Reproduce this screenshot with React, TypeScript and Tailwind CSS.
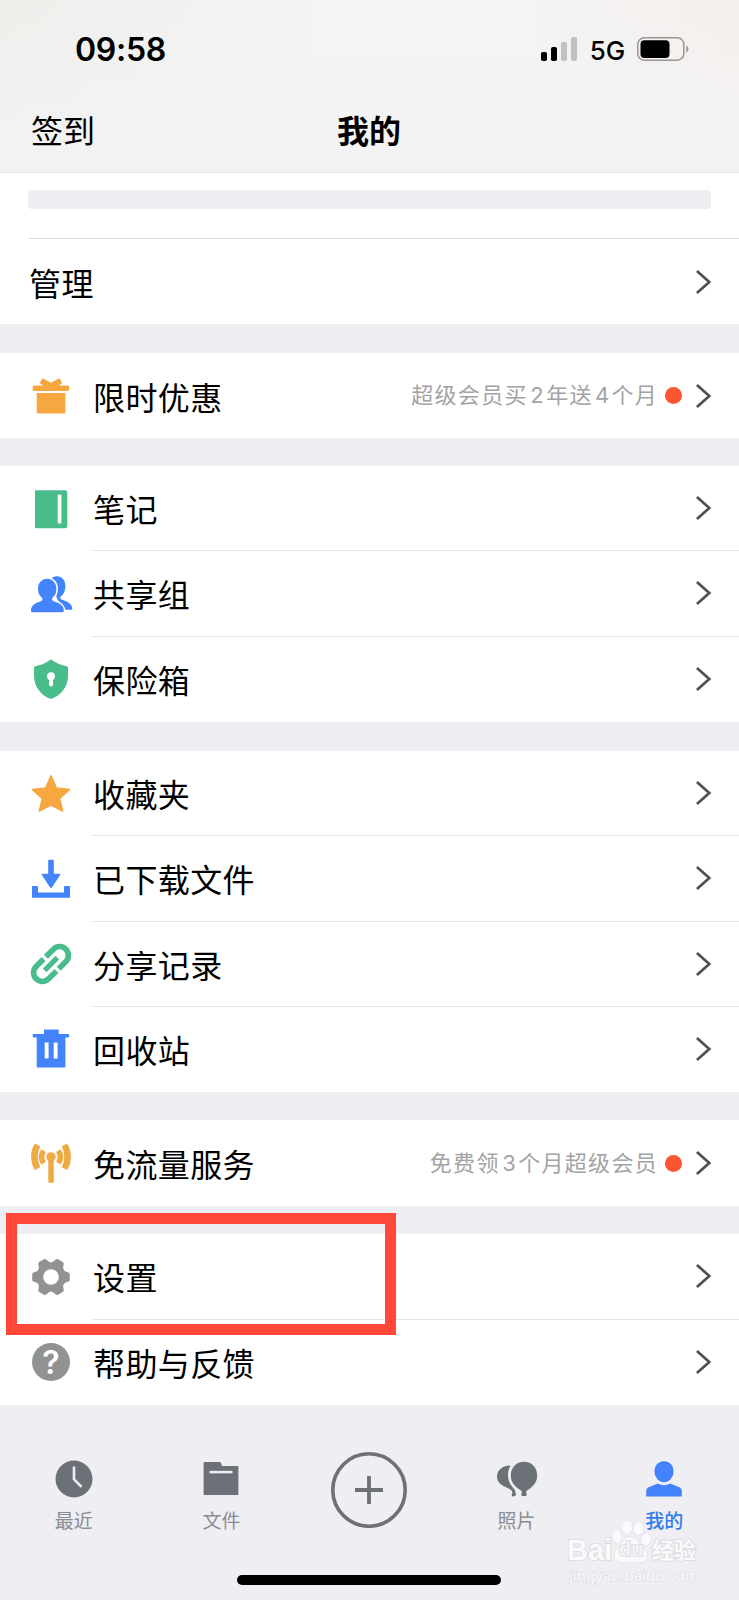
import type { ReactNode } from "react";

type RowProps = {
  icon?: ReactNode;
  label: string;
  hint?: string;
  divider?: boolean;
};

function Icon({ children, className }: { children: ReactNode; className?: string }) {
  return (
    <svg
      viewBox="0 0 40 40"
      fill="currentColor"
      aria-hidden="true"
      className={`size-10 shrink-0 overflow-visible ${className ?? ""}`}
    >
      {children}
    </svg>
  );
}

const GiftIcon = () => (
  <Icon className="text-[#f6a740]">
    <path d="M12.2 2.6 20 6.8l7.800-4.200q.8-.2 1.100.4l2 3.400q.3.900-.4 1.400L27 10H13L9.500 7.800q-.7-.5-.4-1.400l2-3.400q.3-.6 1.100-.4Z" />
    <rect x="1.700" y="9.400" width="36.400" height="5.500" rx="1" />
    <path d="M5.700 16.900h28.700v19.700a1 1 0 0 1-1 1H6.700a1 1 0 0 1-1-1Z" />
  </Icon>
);

const NoteIcon = () => (
  <Icon className="text-[#48bc8b]">
    <path d="M5 1.300h29a2.300 2.300 0 0 1 2.300 2.300V37a2.300 2.300 0 0 1-2.300 2.300H5a1 1 0 0 1-1-1v-36a1 1 0 0 1 1-1Z" />
    <rect x="26.700" y="5.600" width="3.700" height="29" rx=".8" fill="white" />
  </Icon>
);

const GroupIcon = () => (
  <Icon className="text-[#4383fb]">
    <path d="M21 3.800c6.500-4 13.400.2 13.400 8.200 0 5.500-2.300 9-4.900 10.700-.8 1.800.2 2.600 2.500 3.300 6.500 2.300 9.300 5.300 9.300 8.700q0 1-1 1h-5.500L26 25Z" />
    <path
      d="M16.100 4.700c5.600 0 9.300 4.400 9.300 10.100 0 4.400-1.500 7.200-3.800 8.800-1.400 2.700.2 3.500 2.500 4.200 5.900 1.900 8.700 4.500 8.700 8.900q0 1.600-1.500 1.600H1.500Q0 38.300 0 36.700c0-4.400 2.800-7 8.400-8.900 2.300-.7 3.900-1.500 2.500-4.200C8.600 22 7 19.200 7 14.800 7 9.100 10.500 4.700 16.100 4.700Z"
      stroke="white"
      strokeWidth="3"
      paintOrder="stroke"
    />
  </Icon>
);

const SafeIcon = () => (
  <Icon className="text-[#48bc8b]">
    <path d="M19.300.7q.7-.5 1.400 0c4.500 3.500 9.500 5.500 15.200 6.600q1.100.3 1.100 1.400v7.800C37 28 29.500 36.800 20.800 39.700q-.8.300-1.600 0C10.500 36.800 3 28 3 16.500V8.700q0-1.100 1.100-1.400C9.800 6.200 14.800 4.200 19.300.7Z" />
    <circle cx="20" cy="17.300" r="4" fill="white" />
    <path d="M18 18h4v7.400a2 2 0 0 1-4 0Z" fill="white" />
  </Icon>
);

const StarIcon = () => (
  <Icon className="text-[#f6a740]">
    <path
      d="m20 1.700 5.300 12.200 13.400 1.500-10 9.200 3 12.500L20 31.100 8.200 37.100l3-12.500-10-9.200 13.500-1.500Z"
      stroke="currentColor"
      strokeWidth="1.400"
      strokeLinejoin="round"
    />
  </Icon>
);

const DownloadIcon = () => (
  <Icon className="text-[#4383fb]">
    <path d="M18 .8h4q.8 0 .8.800v13.200h5.900q1.200.2.4 1.300l-8 12.200q-1.100 1.400-2.200 0l-8-12.200q-.8-1.100.4-1.300h5.900V1.600q0-.8.8-.8Z" />
    <path d="M1.600 27H6q1 .1 1 1v5.400h26V28q0-.9 1-1h4.400q.6 0 .6.600v10.600q0 .6-.6.600H1.600q-.6 0-.6-.6V27.600q0-.6.6-.6Z" />
  </Icon>
);

const LinkIcon = () => (
  <Icon className="text-[#48bc8b]">
    <g
      transform="translate(20 20) rotate(-45)"
      fill="none"
      stroke="currentColor"
      strokeWidth="5.600"
    >
      <path d="M1.600-8.800H12.200a8.800 8.800 0 0 1 0 17.600H2.200" />
      <path d="M-1.800-8.800h-10.400a8.800 8.800 0 0 0 0 17.600H-1" />
      <path d="M-9 0H9" strokeWidth="5" />
    </g>
  </Icon>
);

const TrashIcon = () => (
  <Icon className="text-[#4383fb]">
    <path d="M13.800.6h13a1 1 0 0 1 1 1V4.900h9.500q.8 0 .8.800v1.900q0 .8-.8.800h-2.900v29.200a1 1 0 0 1-1 1H6.700a1 1 0 0 1-1-1V8.400H2.500q-.8 0-.8-.8V5.700q0-.8.8-.8H13V1.400q0-.8.8-.8Z" />
    <path d="M13.700 13.600h3.900v16h-3.900zM22.700 13.600h3.900v16h-3.900z" fill="white" />
  </Icon>
);

const SignalIcon = () => (
  <Icon className="text-[#efab43]">
    <circle cx="20" cy="13.900" r="4.700" />
    <path d="M17.300 15h5.500v23.700a1 1 0 0 1-1 1h-3.500a1 1 0 0 1-1-1Z" />
    <g stroke="currentColor" strokeWidth="1.400" strokeLinejoin="round">
      <path d="M4.200 1.500 8.400 3.600C5.300 9.500 5.300 18 8.400 23.900L4.200 26.100C-.3 19.300-.3 8.300 4.200 1.500Z" />
      <path d="M35.800 1.500 31.600 3.600c3.100 5.900 3.100 14.400 0 20.300l4.200 2.200c4.500-6.800 4.500-17.800 0-24.600Z" />
      <path d="M10.700 7.200 14 9.300c-1.700 2.800-1.700 6.500 0 9.300l-3.300 2c-3.100-4-3.100-9.400 0-13.400Z" />
      <path d="M29.300 7.200 26 9.300c1.700 2.800 1.700 6.500 0 9.300l3.300 2c3.100-4 3.100-9.400 0-13.400Z" />
    </g>
  </Icon>
);

const GearIcon = () => (
  <Icon className="text-[#919292]">
    <g stroke="currentColor" strokeWidth="4" strokeLinejoin="round">
      {[0, 60, 120, 180, 240, 300].map((angle) => (
        <path key={angle} d="M3.200 17.300 8 15.500h6v9H8l-4.800-1.800Z" transform={`rotate(${angle} 20 20)`} />
      ))}
    </g>
    <circle cx="20" cy="20" r="14.800" />
    <circle cx="20" cy="20" r="7.800" fill="white" />
  </Icon>
);

const HelpIcon = () => (
  <span className="flex size-10 shrink-0 items-center justify-center">
    <span className="flex size-[38px] items-center justify-center rounded-full bg-[#919292] pt-0.5 font-['Inter',sans-serif] text-[32px] leading-none font-semibold text-white">
      ?
    </span>
  </span>
);

function Chevron() {
  return (
    <svg
      viewBox="0 0 16 24"
      fill="none"
      stroke="#505052"
      strokeWidth="2.700"
      aria-hidden="true"
      className="h-6 w-4 shrink-0"
    >
      <path d="M.9 1 13.300 12 .9 23" />
    </svg>
  );
}

function Hint({ text }: { text: string }) {
  return (
    <span className="flex items-baseline pb-[3px] text-[22px] leading-none tracking-[1.300px] text-[#a3a3a5]">
      {text.split(/(\d)/).map((part, i) =>
        /\d/.test(part) ? (
          <span
            key={i}
            className="w-[18.500px] text-center font-['Inter',sans-serif] tracking-normal"
          >
            {part}
          </span>
        ) : (
          <span key={i}>{part}</span>
        ),
      )}
    </span>
  );
}

function Row({ icon, label, hint, divider }: RowProps) {
  return (
    <li className="flex min-h-0 flex-1 items-stretch">
      {icon && <div className="flex w-[92px] shrink-0 items-center pl-[31px]">{icon}</div>}
      <div
        className={`flex flex-1 items-center justify-between pr-[27px] ${
          divider ? "border-b border-[#e4e4e6]" : ""
        }`}
      >
        <span className="pl-px text-[32px] leading-none tracking-[0.400px] whitespace-nowrap">
          {label}
        </span>
        <div className="flex items-center">
          {hint && (
            <>
              <Hint text={hint} />
              <span className="mr-[14px] ml-[7px] size-[17px] rounded-full bg-[#fb5531]" />
            </>
          )}
          <Chevron />
        </div>
      </div>
    </li>
  );
}

function StatusBar() {
  return (
    <div className="flex h-[98px] items-center justify-between pr-[49px] pl-[75px] font-['Inter',sans-serif]">
      <span className="pt-0.5 text-[32px] leading-none font-semibold tracking-[-0.300px]">09:58</span>
      <div className="flex items-center">
        <svg viewBox="0 0 37 24" aria-hidden="true" className="h-6 w-[37px]">
          <rect x="0" y="15" width="6" height="9" rx="1.800" />
          <rect x="10" y="10" width="6" height="14" rx="1.800" />
          <rect x="20" y="5" width="6" height="19" rx="1.800" fill="#c2c1c0" />
          <rect x="30" y="0" width="6" height="24" rx="1.800" fill="#c2c1c0" />
        </svg>
        <span className="w-[59px] pt-[3px] text-center text-[26px] leading-none font-medium">5G</span>
        <svg viewBox="0 0 52 24" aria-hidden="true" className="mr-px h-6 w-[52px]">
          <rect x=".8" y=".8" width="46" height="22.400" rx="6.500" fill="none" stroke="#9b9593" strokeWidth="1.500" />
          <rect x="3.500" y="3.300" width="29" height="17.600" rx="4" />
          <path d="M49.300 8.200q2.200 1.500 2.200 3.800t-2.200 3.800Z" fill="#9b9593" />
        </svg>
      </div>
    </div>
  );
}

function Header() {
  return (
    <header className="h-[173px] border-b border-[#e6e6e8] bg-[linear-gradient(to_bottom,rgba(243,244,246,0)_0%,#f3f3f4_100%),linear-gradient(to_right,#efeeeb_0%,#f4f4f6_45%,#f4f4f4_70%,#f4efec_100%)]">
      <StatusBar />
      <div className="grid grid-cols-3 items-center px-[30px] pt-[15px] text-[32px] leading-none">
        <span className="pl-px">签到</span>
        <h1 className="pr-px text-center font-bold">我的</h1>
      </div>
    </header>
  );
}

const ClockIcon = () => (
  <Icon>
    <circle cx="20" cy="20" r="18.500" />
    <path d="M20 7.500V20.300l7.600 7.600" fill="none" stroke="#eeeef3" strokeWidth="2.600" />
  </Icon>
);

const FolderIcon = () => (
  <Icon>
    <path d="M3.500 3h15.300q.9 0 1.200.8l.9 3.100h15.600q.9 0 .9.900v27.200q0 .9-.9.900H3.500q-.9 0-.9-.9V3.900q0-.9.900-.9Z" />
    <path d="M8.500 13.100h23" stroke="#eeeef3" strokeWidth="2.500" />
  </Icon>
);

const BalloonIcon = () => (
  <Icon>
    <path d="M13.500 6.600q-3.200 5.500-2.400 11.400c.7 6 3.500 8.800 6.500 12.700.9 1.200.6 2 1 3.300.6 1.400.9 2.200-.2 2.600l-2.300.9q-1.500.3-1.300-1.300l.6-2.600C15 30.200 12 30 8 27.800 3.500 25.500 0 22.200 0 17.900 0 11.500 5 6.900 13.500 6.600Z" />
    <path d="M27 2.800c7.800 0 13.200 6 13.200 13.700 0 5.300-2.600 9.300-6.200 12.200-2.500 2-4.500 2.800-5 4.200l.7 2.700q.3 1.300-1.100 1.300h-3.200q-1.400 0-1.100-1.300l.7-2.700c-.5-1.400-2.500-2.200-5-4.200-3.600-2.900-6.200-6.900-6.200-12.200C13.800 8.800 19.200 2.800 27 2.800Z" />
  </Icon>
);

const PersonIcon = () => (
  <Icon>
    <path d="M20 2.300c6 0 9.500 4.300 9.500 10.200S25 23.300 20 23.300s-9.500-4.900-9.500-10.800S14 2.300 20 2.300Z" />
    <path d="M14 24.500c4 2.300 8 2.300 12 0l9.500 3.800q2.300 1.200 2.300 3.400v5q0 .9-.9.900H3.100q-.9 0-.9-.9v-5q0-2.200 2.300-3.400Z" />
  </Icon>
);

function Tab({ icon, label, active }: { icon: ReactNode; label: string; active?: boolean }) {
  return (
    <div
      className={`flex flex-col items-center pt-[54px] ${
        active ? "text-[#4383fb]" : "text-[#6b7177]"
      }`}
    >
      {icon}
      <span
        className={`mt-[11px] text-[19px] leading-none ${
          active ? "font-medium text-[#2f7de9]" : "text-[#8c8c90]"
        }`}
      >
        {label}
      </span>
    </div>
  );
}

function TabBar() {
  return (
    <nav className="flex h-[195px] flex-col items-center justify-between bg-[#eeeef3] pr-px pb-[15px]">
      <div className="grid w-full grid-cols-5">
        <Tab icon={<ClockIcon />} label="最近" />
        <Tab icon={<FolderIcon />} label="文件" />
        <div className="flex justify-center pt-[47px] pl-px">
          <svg viewBox="0 0 76 76" fill="none" stroke="#6d7074" aria-hidden="true" className="size-[76px]">
            <circle cx="38" cy="38" r="36.200" strokeWidth="3.600" />
            <path d="M24 38h28M38 24v28" strokeWidth="3.800" />
          </svg>
        </div>
        <Tab icon={<BalloonIcon />} label="照片" />
        <Tab icon={<PersonIcon />} label="我的" active />
      </div>
      <div className="h-2.5 w-[264px] rounded-full bg-black" />
    </nav>
  );
}

function Watermark() {
  return (
    <div className="absolute top-[1520px] left-[567px] w-[136px] font-['Liberation_Sans','Noto_Sans_CJK_SC',sans-serif] text-[#fafafc] [-webkit-text-stroke:2px_#dddde2] [paint-order:stroke_fill]">
      <div className="flex h-[44px] items-end">
        <span className="w-[47px] pb-px text-[29px] leading-[25px] font-bold">Bai</span>
        <div className="relative h-[44px] w-[34px]">
          <svg viewBox="0 0 34 44" fill="#fafafc" stroke="#dddde2" strokeWidth="1" aria-hidden="true" className="size-full overflow-visible">
            <ellipse cx="3" cy="16.700" rx="4.800" ry="6.200" transform="rotate(-12 3 16.700)" />
            <ellipse cx="13.300" cy="7.300" rx="5" ry="6.800" />
            <ellipse cx="24.500" cy="8.300" rx="5" ry="6.800" transform="rotate(8 24.500 8.300)" />
            <ellipse cx="32" cy="19.300" rx="4.800" ry="6.200" transform="rotate(14 32 19.300)" />
            <path d="M16.500 17c5.500 0 7.300 4.500 10 8 3.300 3.600 7.500 6.500 6.500 11.500-1.500 7-8.500 6-16.500 6s-15 .5-16-6c-.7-5 3-7.500 6-11.200 2.600-3.300 4.500-8.300 10-8.300Z" />
          </svg>
          <span className="absolute bottom-[5px] left-[5px] text-[20px] leading-none font-bold text-[#f3f3f6]">
            du
          </span>
        </div>
        <span className="pb-0.5 pl-1 text-[22px] leading-[22px] font-bold whitespace-nowrap">
          经验
        </span>
      </div>
      <div className="pt-px pl-0.5 font-['Noto_Sans',sans-serif] text-[15px] leading-5 whitespace-nowrap [-webkit-text-stroke:1.500px_#e0e0e5]">
        jingyan.baidu.com
      </div>
    </div>
  );
}

export default function App() {
  return (
    <div className="relative flex h-[1600px] w-[739px] flex-col overflow-hidden bg-[#eeeef3] font-['Noto_Sans_CJK_SC',sans-serif] text-black">
      <Header />

      <main className="flex flex-1 flex-col">
        <section className="h-[151px] bg-white pl-7">
          <div className="flex h-[66px] flex-col justify-end border-b border-[#dcdcde] pb-[29px]">
            <div className="mr-7 h-[19px] rounded bg-[#eeeef3]" />
          </div>
          <ul className="flex h-[85px]">
            <Row label="管理" />
          </ul>
        </section>

        <ul className="mt-[29px] flex h-[85px] flex-col bg-white">
          <Row icon={<GiftIcon />} label="限时优惠" hint="超级会员买2年送4个月" />
        </ul>

        <ul className="mt-7 flex h-[256px] flex-col bg-white">
          <Row icon={<NoteIcon />} label="笔记" divider />
          <Row icon={<GroupIcon />} label="共享组" divider />
          <Row icon={<SafeIcon />} label="保险箱" />
        </ul>

        <ul className="mt-[29px] flex h-[341px] flex-col bg-white">
          <Row icon={<StarIcon />} label="收藏夹" divider />
          <Row icon={<DownloadIcon />} label="已下载文件" divider />
          <Row icon={<LinkIcon />} label="分享记录" divider />
          <Row icon={<TrashIcon />} label="回收站" />
        </ul>

        <ul className="mt-7 flex h-[86px] flex-col bg-white">
          <Row icon={<SignalIcon />} label="免流量服务" hint="免费领3个月超级会员" />
        </ul>

        <ul className="mt-7 flex h-[171px] flex-col bg-white">
          <Row icon={<GearIcon />} label="设置" divider />
          <Row icon={<HelpIcon />} label="帮助与反馈" />
        </ul>
      </main>

      <TabBar />

      <div className="pointer-events-none absolute top-[1213px] left-1.5 h-[122px] w-[390px] border-[11px] border-[#ff4839]" />
      <Watermark />
    </div>
  );
}
